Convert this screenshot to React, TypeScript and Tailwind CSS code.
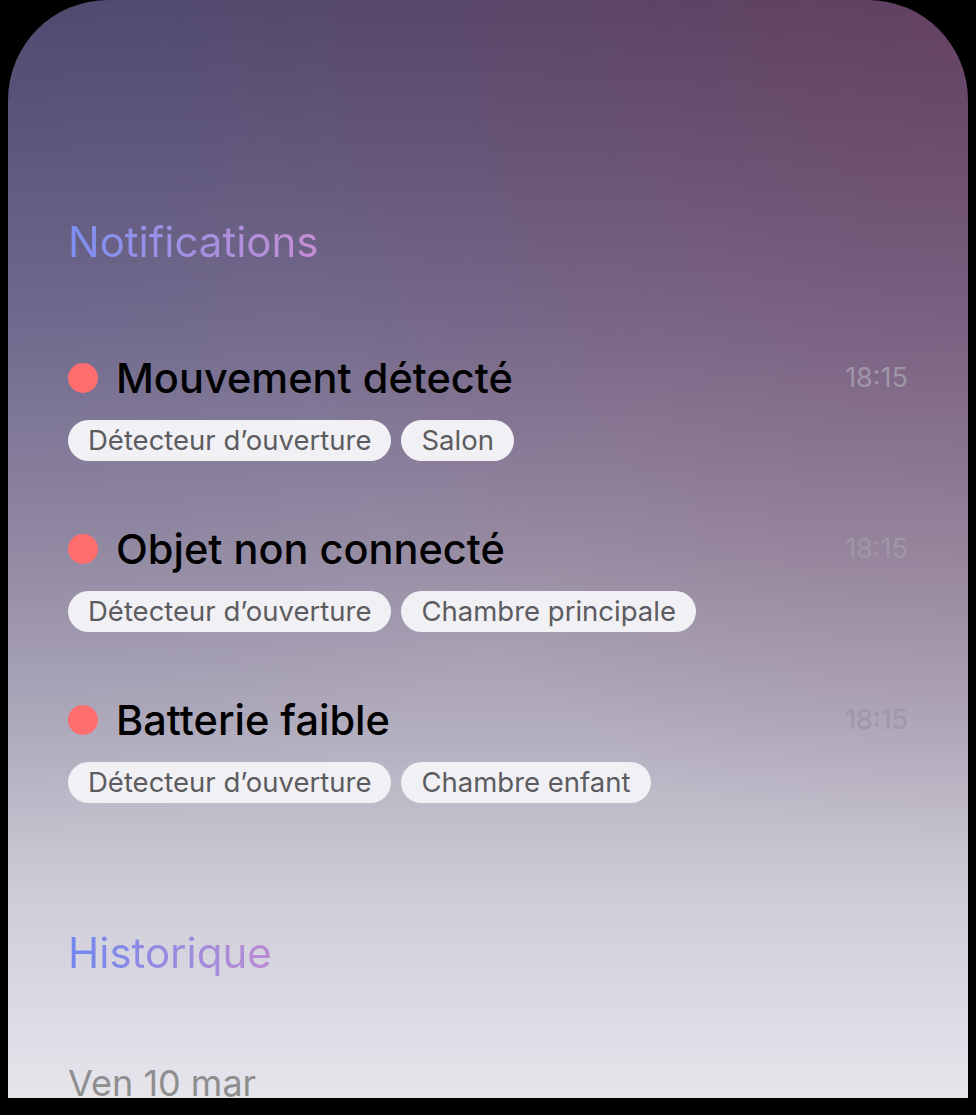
const notifications = [
  { title: 'Mouvement détecté', time: '18:15', tags: ['Détecteur d’ouverture', 'Salon'] },
  { title: 'Objet non connecté', time: '18:15', tags: ['Détecteur d’ouverture', 'Chambre principale'] },
  { title: 'Batterie faible', time: '18:15', tags: ['Détecteur d’ouverture', 'Chambre enfant'] },
];

function Tag({ label }: { label: string }) {
  return (
    <span className="flex h-[41px] items-center rounded-full bg-[#f1f0f4] px-[20px] text-[27.5px] text-[#5c5c60]">
      {label}
    </span>
  );
}

export default function App() {
  return (
    <div className="h-[1115px] overflow-hidden bg-black px-2 font-['Inter',sans-serif]">
      <div className="h-[1098px] overflow-hidden rounded-t-[100px] bg-[radial-gradient(ellipse_at_top_right,rgba(120,45,80,0.35),transparent_55%),radial-gradient(ellipse_at_top_left,rgba(60,70,130,0.25),transparent_55%),linear-gradient(to_bottom,#574a69,#7c7190_30%,#9a90a6_50%,#b2adbd_66%,#cfcdd8_82%,#e6e5ec)] px-[60px] pt-[214px]">
        <h2 className="inline-block bg-linear-to-r from-[#7c90f2] to-[#c68dd2] bg-clip-text text-[42px] leading-[56px] text-transparent">
          Notifications
        </h2>

        <div className="mt-[84px] flex flex-col gap-[64px]">
          {notifications.map((n) => (
            <div key={n.title} className="flex flex-col gap-[18px]">
              <div className="flex items-center">
                <span className="h-[30px] w-[30px] shrink-0 rounded-full bg-[#ff6e6e]" />
                <span className="ml-[18px] flex-1 text-[41.5px] leading-[48px] font-medium text-black">
                  {n.title}
                </span>
                <span className="text-[27px] text-[#9f96a8]">{n.time}</span>
              </div>
              <div className="flex gap-[10px]">
                {n.tags.map((t) => (
                  <Tag key={t} label={t} />
                ))}
              </div>
            </div>
          ))}
        </div>

        <h2 className="mt-[122px] inline-block bg-linear-to-r from-[#6f87ee] to-[#bc8bd2] bg-clip-text text-[42px] leading-[56px] text-transparent">
          Historique
        </h2>

        <p className="mt-[75px] text-[36px] text-[#8e8e8f]">Ven 10 mar</p>
      </div>
    </div>
  );
}
